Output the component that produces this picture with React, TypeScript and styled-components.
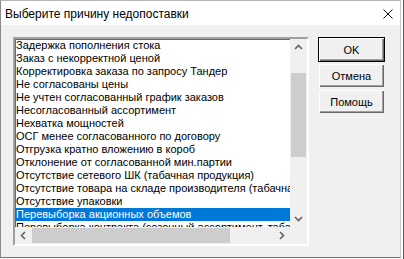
import React from 'react';
import styled, { createGlobalStyle } from 'styled-components';

const reasons = [
  'Задержка пополнения стока',
  'Заказ с некорректной ценой',
  'Корректировка заказа по запросу Тандер',
  'Не согласованы цены',
  'Не учтен согласованный график заказов',
  'Несогласованный ассортимент',
  'Нехватка мощностей',
  'ОСГ менее согласованного по договору',
  'Отгрузка кратно вложению в короб',
  'Отклонение от согласованной мин.партии',
  'Отсутствие сетевого ШК (табачная продукция)',
  'Отсутствие товара на складе производителя (табачная продукция)',
  'Отсутствие упаковки',
  'Перевыборка акционных объемов',
  'Перевыборка контракта (сезонный ассортимент, табачная продукция)',
];

const selectedIndex = 13;

export default function App() {
  return (
    <>
      <GlobalStyle />
      <Screen>
        <Window>
          <TitleBar>
            <Title>Выберите причину недопоставки</Title>
            <CloseIcon viewBox="0 0 10 10">
              <path d="M0.5 0.5 L9.5 9.5 M9.5 0.5 L0.5 9.5" />
            </CloseIcon>
          </TitleBar>
          <Body>
            <ListBox>
              <Items>
                {reasons.map((r, i) => (
                  <Item key={r} $selected={i === selectedIndex}>
                    {r}
                  </Item>
                ))}
              </Items>
              <VScroll>
                <ArrowButton>
                  <Arrow dir="up" />
                </ArrowButton>
                <VTrack>
                  <VThumb />
                </VTrack>
                <ArrowButton>
                  <Arrow dir="down" />
                </ArrowButton>
              </VScroll>
              <HScroll>
                <ArrowButton>
                  <Arrow dir="left" />
                </ArrowButton>
                <HTrack>
                  <HThumb />
                </HTrack>
                <ArrowButton>
                  <Arrow dir="right" />
                </ArrowButton>
              </HScroll>
              <Corner />
            </ListBox>
            <Buttons>
              <Button $default>OK</Button>
              <Button>Отмена</Button>
              <Button>Помощь</Button>
            </Buttons>
          </Body>
        </Window>
      </Screen>
    </>
  );
}

const arrowPaths: Record<string, string> = {
  up: 'M1 6 L4.5 2.5 L8 6',
  down: 'M1 3 L4.5 6.5 L8 3',
  left: 'M6 1 L2.5 4.5 L6 8',
  right: 'M3 1 L6.5 4.5 L3 8',
};

const Arrow = ({ dir }: { dir: string }) => (
  <ArrowSvg viewBox="0 0 9 9">
    <path d={arrowPaths[dir]} />
  </ArrowSvg>
);

const GlobalStyle = createGlobalStyle`
  html, body {
    margin: 0;
    padding: 0;
    background: #ffffff;
  }
`;

const Screen = styled.div`
  width: 404px;
  height: 259px;
  overflow: hidden;
  background: #ffffff;
  border-right: 1px solid #5a5a5a;
  box-sizing: border-box;
`;

const Window = styled.div`
  width: 401px;
  height: 258px;
  box-sizing: border-box;
  display: flex;
  flex-direction: column;
  background: #f0f0f0;
  border-left: 1px solid #8a8a8a;
  border-top: 1px solid #b5b5b5;
  border-right: 1px solid #c8c8c8;
  border-bottom: 1px solid #6e6e6e;
`;

const TitleBar = styled.div`
  height: 24px;
  flex: none;
  background: #ffffff;
  display: flex;
  align-items: center;
  justify-content: space-between;
  padding: 0 7px 0 4px;
`;

const Title = styled.div`
  font-family: 'Liberation Sans', Arial, sans-serif;
  font-size: 12px;
  color: #000000;
  margin-top: 1px;
`;

const CloseIcon = styled.svg`
  width: 10px;
  height: 10px;
  fill: none;
  stroke: #111111;
  stroke-width: 1;
  margin-top: 2px;
`;

const Body = styled.div`
  flex: 1;
  display: flex;
  align-items: flex-start;
  gap: 9px;
  padding: 12px 0 0 12px;
`;

const ListBox = styled.div`
  width: 296px;
  height: 209px;
  box-sizing: border-box;
  display: grid;
  grid-template-columns: 275px 17px;
  grid-template-rows: 188px 17px;
  background: #ffffff;
  border-style: solid;
  border-width: 2px;
  border-color: #a0a0a0 #ffffff #ffffff #a0a0a0;
  box-shadow: inset 1px 1px 0 #696969;
  overflow: hidden;
`;

const Items = styled.div`
  overflow: hidden;
  font-family: 'Liberation Sans', Arial, sans-serif;
  font-size: 11px;
  color: #000000;
`;

const Item = styled.div<{ $selected?: boolean }>`
  height: 13px;
  line-height: 13px;
  padding-left: 1px;
  white-space: nowrap;
  background: ${(p) => (p.$selected ? '#0078d7' : 'transparent')};
  color: ${(p) => (p.$selected ? '#ffffff' : '#000000')};
`;

const VScroll = styled.div`
  display: flex;
  flex-direction: column;
  background: #f0f0f0;
`;

const HScroll = styled.div`
  display: flex;
  background: #f0f0f0;
`;

const Corner = styled.div`
  background: #f0f0f0;
`;

const ArrowButton = styled.div`
  width: 17px;
  height: 17px;
  flex: none;
  display: flex;
  align-items: center;
  justify-content: center;
`;

const ArrowSvg = styled.svg`
  width: 9px;
  height: 9px;
  fill: none;
  stroke: #606060;
  stroke-width: 1.6;
`;

const VTrack = styled.div`
  flex: 1;
  padding: 17px 1px 0 1px;
`;

const VThumb = styled.div`
  height: 84px;
  background: #cdcdcd;
`;

const HTrack = styled.div`
  flex: 1;
  padding: 1px 0;
`;

const HThumb = styled.div`
  width: 198px;
  height: 100%;
  background: #cdcdcd;
`;

const Buttons = styled.div`
  display: flex;
  flex-direction: column;
  gap: 1px;
`;

const Button = styled.div<{ $default?: boolean }>`
  width: 67px;
  height: 25px;
  box-sizing: border-box;
  display: flex;
  align-items: center;
  justify-content: center;
  font-family: 'Liberation Sans', Arial, sans-serif;
  font-size: 11px;
  color: #000000;
  background: #f0f0f0;
  border: 1px solid ${(p) => (p.$default ? '#000000' : '#f0f0f0')};
  box-shadow: inset 1px 1px 0 #ffffff, inset -1px -1px 0 #696969,
    inset -2px -2px 0 #a0a0a0;
`;
